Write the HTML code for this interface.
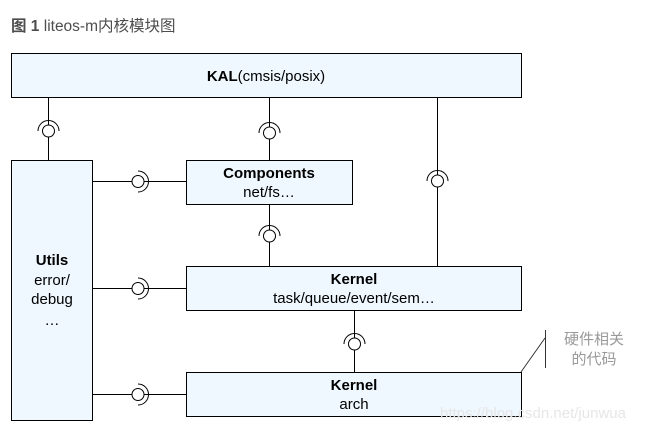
<!DOCTYPE html>
<html><head><meta charset="utf-8"><style>
body{margin:0;background:#fff;width:650px;height:433px;overflow:hidden}
svg{display:block}
text{font-family:"Liberation Sans","Noto Sans CJK SC",sans-serif}
</style></head><body>
<svg width="650" height="433" viewBox="0 0 650 433">
<text x="11" y="31" font-size="15.5" fill="#4d4d4d"><tspan font-weight="bold">图 1</tspan> liteos-m内核模块图</text>
<g fill="#f0f8ff" stroke="#000" stroke-width="1">
<rect x="11.5" y="53.5" width="510" height="44"/>
<rect x="11.5" y="160.5" width="81" height="260"/>
<rect x="186.5" y="160.5" width="166" height="44"/>
<rect x="186.5" y="266.5" width="335" height="44"/>
<rect x="186.5" y="372.5" width="335" height="44"/>
</g>
<g stroke="#000" stroke-width="1" fill="none">
<path d="M48.5 97V125M48.5 137V160"/><circle cx="48.5" cy="131" r="6"/><path d="M38 131A10.5 10.5 0 0 1 59 131"/>
<path d="M269.5 97V127M269.5 139V160"/><circle cx="269.5" cy="133" r="6"/><path d="M259 133A10.5 10.5 0 0 1 280 133"/>
<path d="M437.5 97V175M437.5 187V266"/><circle cx="437.5" cy="181" r="6"/><path d="M427 181A10.5 10.5 0 0 1 448 181"/>
<path d="M269.5 204V230M269.5 242V266"/><circle cx="269.5" cy="236" r="6"/><path d="M259 236A10.5 10.5 0 0 1 280 236"/>
<path d="M354.5 310V338M354.5 350V372"/><circle cx="354.5" cy="344" r="6"/><path d="M344 344A10.5 10.5 0 0 1 365 344"/>
<path d="M92 181.5H132M144 181.5H186"/><circle cx="138" cy="181.5" r="6"/><path d="M138 171A10.5 10.5 0 0 1 138 192"/>
<path d="M92 288.5H132M144 288.5H186"/><circle cx="138" cy="288.5" r="6"/><path d="M138 278A10.5 10.5 0 0 1 138 299"/>
<path d="M92 394.5H132M144 394.5H186"/><circle cx="138" cy="394.5" r="6"/><path d="M138 384A10.5 10.5 0 0 1 138 405"/>
<path d="M521 372L545 338M545.5 330V368" stroke="#333"/>
</g>
<g font-size="15" text-anchor="middle" fill="#000">
<text x="266" y="81"><tspan font-weight="bold">KAL</tspan>(cmsis/posix)</text>
<text x="269" y="178" font-weight="bold">Components</text>
<text x="269" y="197">net/fs…</text>
<text x="354" y="284" font-weight="bold">Kernel</text>
<text x="354" y="303">task/queue/event/sem…</text>
<text x="354" y="390" font-weight="bold">Kernel</text>
<text x="354" y="409">arch</text>
<text x="52" y="265" font-weight="bold">Utils</text>
<text x="52" y="285">error/</text>
<text x="52" y="304">debug</text>
<text x="52" y="325">…</text>
<text x="594" y="344" fill="#999">硬件相关</text>
<text x="594" y="364" fill="#999">的代码</text>
</g>
<text x="440" y="418" font-size="15" fill="#e6e6e6">https://blog.csdn.net/junwua</text>
</svg>
</body></html>
